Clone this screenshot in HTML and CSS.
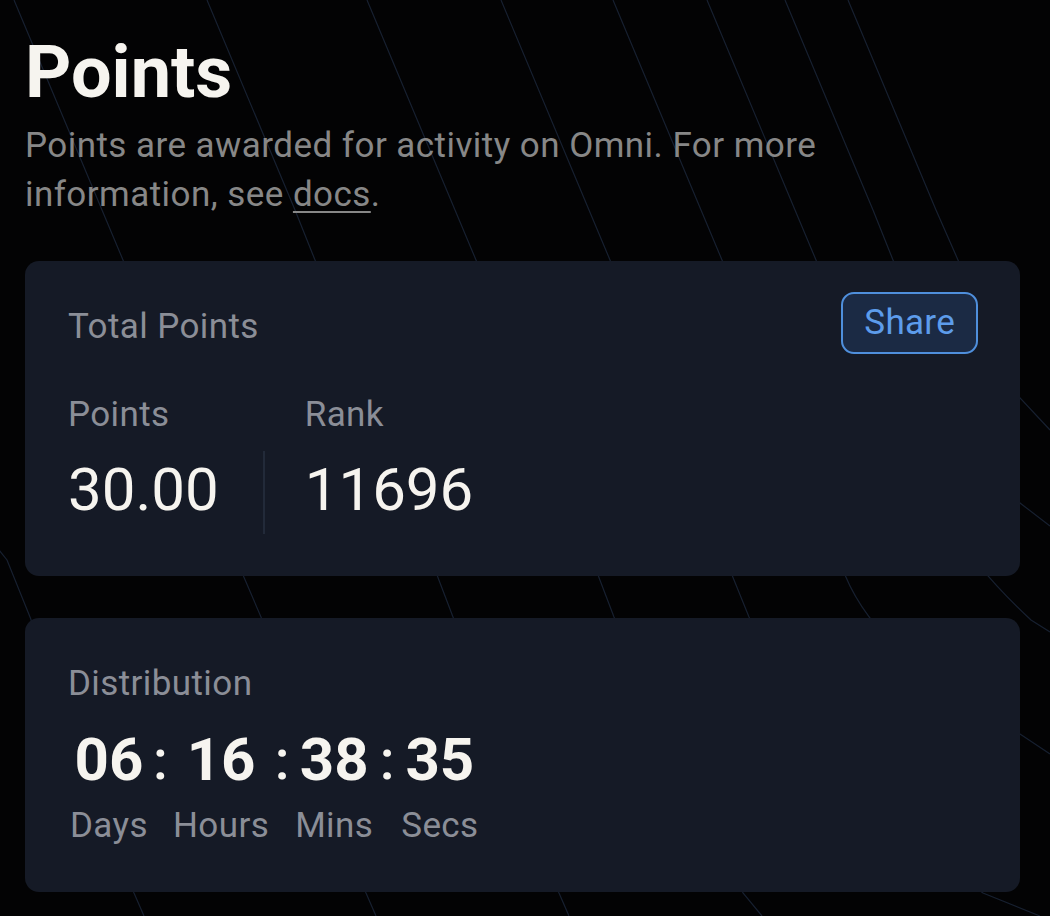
FILE: index.html
```html
<!DOCTYPE html>
<html lang="en">
<head>
<meta charset="utf-8">
<title>Points</title>
<link rel="stylesheet" href="styles.css">
</head>
<body>
<svg class="bg-lines" width="1050" height="916" viewBox="0 0 1050 916" aria-hidden="true">
  <g fill="none" stroke="#172030" stroke-width="1.2">
    <polyline points="-5,545 7,560 30,617 134,893 144,916"/>
    <polyline points="14,0 102,210 123,260 243,575 261,617 366,893 376,916"/>
    <polyline points="207,0 295,210 315,260 437,575 453,617 559,893 569,916"/>
    <polyline points="367,0 455,210 476,260 598,575 614,617 743,893 762,916"/>
    <path d="M501,0 L589,210 L610,260 L732,575 L749,617 Q850,800 983,893 L1040,916"/>
    <path d="M613,0 L701,210 L722,260 L845,575 Q880,660 1020,734 L1050,754"/>
    <path d="M707,0 L795,210 L816,260 Q900,500 1031,620 L1050,632"/>
    <path d="M785,0 L873,210 L893,260 Q960,420 1020,503 L1050,526"/>
    <path d="M848,0 L936,210 L958,260 Q990,350 1020,398 L1050,430"/>
  </g>
</svg>
<main class="page">
  <h1 class="title">Points</h1>
  <p class="intro">Points are awarded for activity on Omni. For more information, see <a class="link" href="#">docs</a>.</p>

  <section class="card">
    <div class="card-head">
      <span class="label head-label">Total Points</span>
      <button class="share" type="button">Share</button>
    </div>
    <div class="stats">
      <div class="stat">
        <span class="label">Points</span>
        <span class="value">30.00</span>
      </div>
      <div class="divider"></div>
      <div class="stat">
        <span class="label">Rank</span>
        <span class="value">11696</span>
      </div>
    </div>
  </section>

  <section class="card card-dist">
    <span class="label">Distribution</span>
    <div class="countdown">
      <span class="num">06</span><span class="colon">:</span>
      <span class="num">16</span><span class="colon">:</span>
      <span class="num">38</span><span class="colon">:</span>
      <span class="num">35</span>
      <span class="unit">Days</span><span></span>
      <span class="unit">Hours</span><span></span>
      <span class="unit">Mins</span><span></span>
      <span class="unit">Secs</span>
    </div>
  </section>
</main>
</body>
</html>
```

FILE: styles.css
```css
html, body {
  margin: 0;
  padding: 0;
}

body {
  position: relative;
  width: 1050px;
  height: 916px;
  overflow: hidden;
  background: #030304;
  font-family: Roboto, "Liberation Sans", sans-serif;
  color: #f6f4ef;
}

.bg-lines {
  position: absolute;
  left: 0;
  top: 0;
  z-index: 0;
}

.page {
  position: relative;
  z-index: 1;
  padding: 30px 30px 0 25px;
}

.title {
  margin: 0;
  font-size: 72px;
  font-weight: 700;
  line-height: normal;
  color: #f6f4ef;
}

.intro {
  margin: 6px 0 0;
  font-size: 35px;
  letter-spacing: 0.45px;
  line-height: 49px;
  color: #878787;
  max-width: 840px;
}

.link {
  color: #878787;
  text-decoration: underline;
  text-underline-offset: 5px;
  text-decoration-thickness: 2px;
}

.card {
  background: #151a26;
  border-radius: 14px;
  padding: 31px 42px 42px 43px;
  margin-top: 42px;
}

.card-head {
  display: flex;
  justify-content: space-between;
  align-items: flex-start;
}

.label {
  font-size: 35px;
  letter-spacing: 0.4px;
  line-height: normal;
  color: #8b8e97;
}

.head-label {
  margin-top: 14px;
}

.share {
  font-family: inherit;
  font-size: 35px;
  letter-spacing: 0.3px;
  line-height: 58px;
  padding: 0 21px;
  color: #5d9ceb;
  background: #1b2a44;
  border: 2px solid #4f8fdc;
  border-radius: 13px;
}

.stats {
  display: flex;
  align-items: flex-end;
  margin-top: 40px;
}

.stat {
  display: flex;
  flex-direction: column;
}

.value {
  font-size: 60px;
  line-height: 70px;
  margin-top: 20px;
  padding-bottom: 9px;
  color: #f6f4ef;
}

.divider {
  width: 2px;
  height: 83px;
  background: #222a39;
  margin: 0 40px 0 44px;
}

.card-dist {
  padding-top: 45px;
  padding-bottom: 46px;
}

.card-dist > .label {
  display: block;
}

.countdown {
  display: grid;
  grid-template-columns: auto 25px auto 26px auto 28px auto;
  justify-content: start;
  justify-items: center;
  margin-top: 21px;
  margin-left: 2px;
}

.num {
  font-size: 60px;
  font-weight: 700;
  line-height: 70px;
  color: #f6f4ef;
}

.colon {
  font-size: 56px;
  font-weight: 500;
  line-height: 70px;
  color: #f6f4ef;
}

.unit {
  font-size: 35px;
  letter-spacing: 0.4px;
  line-height: normal;
  margin-top: 10px;
  color: #8b8e97;
}
```
